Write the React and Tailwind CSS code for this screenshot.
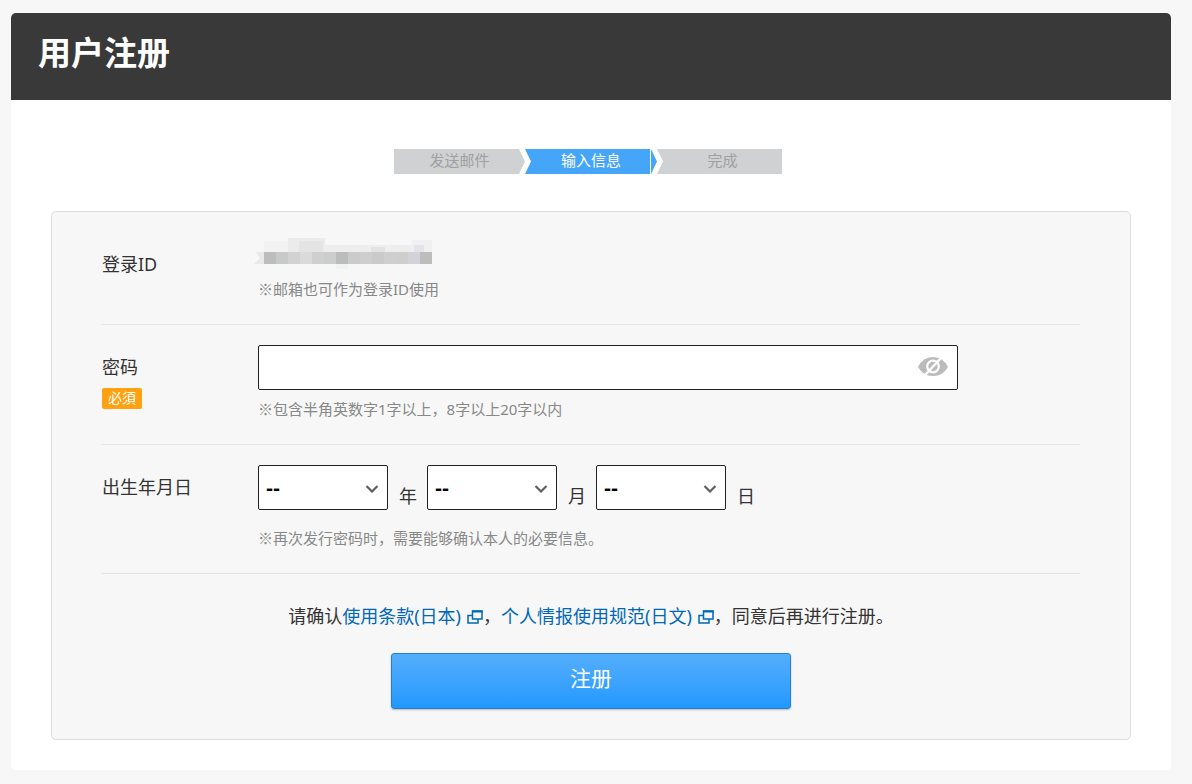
import { useState } from "react";

function Row({ label, htmlFor, badge, children }) {
  return (
    <div className="flex border-b border-[#e4e4e4] pt-5 pb-[23px]">
      <div className="w-[156px] shrink-0 pt-2">
        {htmlFor ? (
          <label htmlFor={htmlFor} className="block text-[18px] leading-7">{label}</label>
        ) : (
          <span className="block text-[18px] leading-7">{label}</span>
        )}
        {badge && (
          <span className="mt-[7px] block h-[21px] w-10 rounded-[2px] bg-[#ffa110] text-center text-[14px] leading-5 text-white">
            {badge}
          </span>
        )}
      </div>
      <div className="min-w-0 grow">{children}</div>
    </div>
  );
}

function Note({ children }) {
  return (
    <p className="text-[15px] leading-6 text-[#888]">
      <span className="font-['Noto_Sans_CJK_SC',sans-serif]">※</span>
      {children}
    </p>
  );
}

function DatePart({ id, unit, options }) {
  return (
    <div className="flex items-end">
      <div className="relative">
        <select
          id={id}
          className="block h-[45px] w-[130px] appearance-none rounded-[2px] border border-[#222] bg-white pr-8 pl-[7px] font-['Liberation_Sans',sans-serif] text-[21px] font-bold text-black"
        >
          <option value="">--</option>
          {options.map((n) => (
            <option key={n}>{n}</option>
          ))}
        </select>
        <svg className="pointer-events-none absolute top-5 right-2 h-2 w-4" viewBox="0 0 16 8" fill="none" stroke="#606060" strokeWidth="2.2">
          <path d="M2.5 1 8 6.5 13.5 1" />
        </svg>
      </div>
      <label htmlFor={id} className="w-[39px] pl-[11px] text-[18px] leading-7">{unit}</label>
    </div>
  );
}

function WindowIcon() {
  return (
    <svg className="ml-1.5 inline-block h-[14px] w-4 align-[-1px]" viewBox="0 0 16 14" fill="none" stroke="#0068b7">
      <path d="M5.5 1H15v8H5.5zM5 5.5H1V13h10V9" strokeWidth="1.5" />
      <path d="M5 1.500H15.700" strokeWidth="2" />
    </svg>
  );
}

const maskedCells = [
  "#bdbdbd", "#c8c9c9", "#d2d2d2", "#dadada", "#cfcfcf", "#cccece", "#babdbc",
  "#cbcbcb", "#cecece", "#cacaca", "#ced0cf", "#cfcecd", "#d3d2d9", "#bdbdbd",
];

function MaskedId() {
  return (
    <svg className="-ml-1 block h-[35px] w-[190px] overflow-visible" viewBox="0 0 190 35" role="img" aria-label="登录ID">
      <path d="M10-1h24v11H10z" fill="#f2f2f2" />
      <path d="M34-4h37V10H34z" fill="#ebebeb" />
      <path d="M45-1h24V10H45z" fill="#e4e4e4" />
      <path d="M71 3h87v7H71z" fill="#eeeeee" />
      <path d="M117 5h14v5h-14z" fill="#e3e3e3" />
      <path d="M158-2h20v12h-20z" fill="#f0f0f0" />
      <path d="M160 3h10v7h-10z" fill="#e4e4e6" />
      <path d="M2 10h8v12H0l6-6z" fill="#e9e9e9" />
      <path d="M82 22h12v5H82z" fill="#f1f2f2" />
      {maskedCells.map((fill, i) => (
        <rect key={i} x={10 + i * 12} y="10" width="12" height="12" fill={fill} />
      ))}
    </svg>
  );
}

const range = (a, b) => Array.from({ length: b - a + 1 }, (_, i) => a + i);

export default function App() {
  const [shown, setShown] = useState(false);
  return (
    <div className="min-h-screen bg-[#f7f7f7] pt-[13px] pr-[21px] pb-[14px] pl-[11px] font-['Noto_Sans','Noto_Sans_CJK_SC',sans-serif] text-[#333]" lang="zh-CN">
      <main className="overflow-hidden rounded-[5px] bg-white">
        <header className="bg-[#393939] px-[27px] pt-4 pb-[23px]">
          <h1 className="text-[33px] leading-[48px] font-bold text-white">用户注册</h1>
        </header>
        <div className="px-10 pt-[49px] pb-[30px]">
          <ol className="mr-1.5 flex justify-center text-[15px] leading-[23px] text-[#a0a0a0]">
            <li className="h-[25px] w-[131px] bg-[#cfd1d2] text-center [clip-path:polygon(0_0,125px_0,100%_50%,125px_100%,0_100%)]">发送邮件</li>
            <li aria-current="step" className="h-[25px] w-[132px] bg-[#45a5f9] text-center text-white [clip-path:polygon(0_0,125px_0,125px_100%,126px_100%,126px_0,100%_50%,126px_100%,0_100%,6px_50%)]">输入信息</li>
            <li className="h-[25px] w-[125px] bg-[#cfd1d2] pl-1.5 text-center [clip-path:polygon(0_0,100%_0,100%_100%,0_100%,6px_50%)]">完成</li>
          </ol>
          <form className="mt-[37px] rounded-[5px] border border-[#ddd] bg-[#f7f7f7] px-[50px] pt-[10px] pb-[30px]" onSubmit={(e) => e.preventDefault()}>
            <Row label="登录ID">
              <MaskedId />
              <Note>邮箱也可作为登录ID使用</Note>
            </Row>
            <Row label="密码" htmlFor="password" badge="必須">
              <div className="relative mb-[7px] max-w-[700px]">
                <input id="password" type={shown ? "text" : "password"} className="block h-[45px] w-full rounded-[2px] border border-[#222] bg-white pr-12 pl-2 text-[18px]" />
                <button type="button" aria-label="显示密码" onClick={() => setShown(!shown)} className="absolute top-3 right-[10px] h-5 w-[30px]">
                  <svg viewBox="0 0 30 20" className="h-5 w-[30px]" fill="none">
                    <path d="M0 10Q5 0 15 0t15 10Q25 19 15 19T0 10Z" fill="#bbb" />
                    <circle cx="15" cy="9.500" r="5.800" stroke="#fff" strokeWidth="2.200" />
                    <path d="M7.500 17.500 22.500 1.500" stroke="#fff" strokeWidth="2.500" />
                  </svg>
                </button>
              </div>
              <Note>包含半角英数字1字以上，8字以上20字以内</Note>
            </Row>
            <Row label="出生年月日">
              <div className="mb-4 flex">
                <DatePart id="year" unit="年" options={range(1920, 2024)} />
                <DatePart id="month" unit="月" options={range(1, 12)} />
                <DatePart id="day" unit="日" options={range(1, 31)} />
              </div>
              <Note>再次发行密码时，需要能够确认本人的必要信息。</Note>
            </Row>
            <p className="mt-7 text-center text-[18px] leading-7">
              请确认<a href="#terms" className="text-[#0068b7]">使用条款(日本)<WindowIcon /></a>，<a href="#privacy" className="text-[#0068b7]">个人情报使用规范(日文)<WindowIcon /></a>，同意后再进行注册。
            </p>
            <button type="submit" className="mx-auto mt-[23px] block h-14 w-[400px] rounded-[3px] border border-[#2a80c8] bg-linear-to-b from-[#54aefc] to-[#1f98ff] pb-1 text-[21px] text-white shadow-[0_1px_2px_rgba(0,0,0,0.25)]">
              注册
            </button>
          </form>
        </div>
      </main>
    </div>
  );
}
